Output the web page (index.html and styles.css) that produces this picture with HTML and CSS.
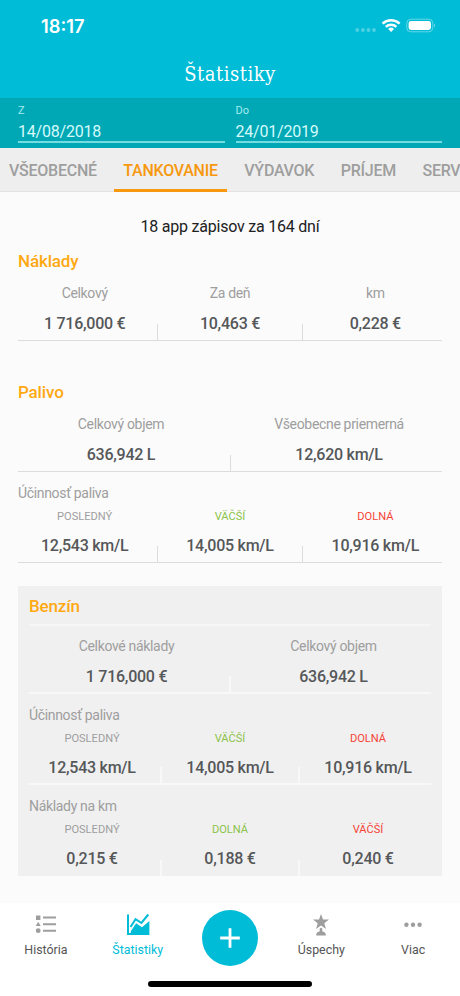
FILE: index.html
```html
<!DOCTYPE html>
<html lang="sk">
<head>
<meta charset="utf-8">
<title>Štatistiky</title>
<link rel="stylesheet" href="styles.css">
</head>
<body>
<div class="app">
  <header class="top">
    <div class="status">
      <span class="clock">18:17</span>
      <svg class="status-icons" width="80" height="20" viewBox="0 0 80 20">
        <g fill="#fff" opacity=".3"><circle cx="2.3" cy="14" r="1.9"/><circle cx="7.9" cy="14" r="1.9"/><circle cx="13.5" cy="14" r="1.9"/><circle cx="19" cy="14" r="1.9"/></g>
        <g fill="none" stroke="#fff" stroke-width="2.5"><path d="M27.6 7.6a12.4 12.4 0 0 1 17 0"/><path d="M30.8 10.9a7.7 7.7 0 0 1 10.6 0"/></g>
        <path fill="#fff" d="M33.2 12.9a4.2 4.2 0 0 1 5.8 0L36.1 16z"/>
        <rect x="51.8" y="3.2" width="26" height="12.6" rx="4" fill="none" stroke="#fff" stroke-opacity=".4"/>
        <rect x="53.6" y="5" width="22.4" height="9" rx="2.4" fill="#fff"/>
        <path d="M79 7.5q2 1.9 0 3.8z" fill="#fff" opacity=".5"/>
      </svg>
    </div>
    <h1 class="title">Štatistiky</h1>
  </header>
  <section class="dates">
    <div class="date"><span class="date-label">Z</span><span class="date-value">14/08/2018</span></div>
    <div class="date"><span class="date-label">Do</span><span class="date-value">24/01/2019</span></div>
  </section>
  <nav class="tabs">
    <span class="tab">VŠEOBECNÉ</span>
    <span class="tab active">TANKOVANIE</span>
    <span class="tab">VÝDAVOK</span>
    <span class="tab">PRÍJEM</span>
    <span class="tab">SERV</span>
  </nav>
  <main class="content">
    <p class="summary">18 app zápisov za 164 dní</p>
    <section class="group costs">
      <h2 class="heading">Náklady</h2>
      <div class="row three">
        <div class="stat"><span class="label">Celkový</span><span class="value">1 716,000 €</span></div>
        <div class="stat"><span class="label">Za deň</span><span class="value">10,463 €</span></div>
        <div class="stat"><span class="label">km</span><span class="value">0,228 €</span></div>
      </div>
    </section>
    <section class="group">
      <h2 class="heading">Palivo</h2>
      <div class="row two">
        <div class="stat"><span class="label">Celkový objem</span><span class="value">636,942 L</span></div>
        <div class="stat"><span class="label">Všeobecne priemerná</span><span class="value">12,620 km/L</span></div>
      </div>
      <h3 class="subheading">Účinnosť paliva</h3>
      <div class="row three compact">
        <div class="stat"><span class="label">POSLEDNÝ</span><span class="value">12,543 km/L</span></div>
        <div class="stat"><span class="label good">VÄČŠÍ</span><span class="value">14,005 km/L</span></div>
        <div class="stat"><span class="label bad">DOLNÁ</span><span class="value">10,916 km/L</span></div>
      </div>
    </section>
    <section class="card">
      <h2 class="heading">Benzín</h2>
      <div class="row two">
        <div class="stat"><span class="label">Celkové náklady</span><span class="value">1 716,000 €</span></div>
        <div class="stat"><span class="label">Celkový objem</span><span class="value">636,942 L</span></div>
      </div>
      <h3 class="subheading">Účinnosť paliva</h3>
      <div class="row three compact">
        <div class="stat"><span class="label">POSLEDNÝ</span><span class="value">12,543 km/L</span></div>
        <div class="stat"><span class="label good">VÄČŠÍ</span><span class="value">14,005 km/L</span></div>
        <div class="stat"><span class="label bad">DOLNÁ</span><span class="value">10,916 km/L</span></div>
      </div>
      <h3 class="subheading">Náklady na km</h3>
      <div class="row three compact last">
        <div class="stat"><span class="label">POSLEDNÝ</span><span class="value">0,215 €</span></div>
        <div class="stat"><span class="label good">DOLNÁ</span><span class="value">0,188 €</span></div>
        <div class="stat"><span class="label bad">VÄČŠÍ</span><span class="value">0,240 €</span></div>
      </div>
    </section>
  </main>
  <footer class="bottom">
    <nav class="nav">
      <a class="item">
        <svg width="24" height="24" viewBox="0 0 24 24" fill="#9e9e9e"><path d="M2 2.5h4.400v4.400H2zM9 3.500h13v2H9zM4.200 8.700l2.500 4.400h-5zM9 10.200h13v2H9zM9 16.700h13v2H9z"/><circle cx="4.200" cy="17.700" r="2.400"/></svg>
        <span>História</span>
      </a>
      <a class="item selected">
        <svg width="24" height="24" viewBox="0 0 24 24"><path d="M2 1.500v19.500h21" fill="none" stroke="#00bcd7" stroke-width="2"/><path d="M4.500 14L9.600 6.200l5.800 3.800L22.300 1.500" fill="none" stroke="#00bcd7" stroke-width="2"/><path d="M4.800 21.900v-3.700l5.300-8 5.900 4.100L23.400 8v13.900z" fill="#00bcd7"/></svg>
        <span>Štatistiky</span>
      </a>
      <a class="add"><svg width="56" height="56" viewBox="0 0 56 56"><circle cx="28" cy="28" r="28" fill="#00bcd7"/><path d="M28 18.200v19.600M18.200 28h19.600" stroke="#fff" stroke-width="2.800"/></svg></a>
      <a class="item">
        <svg width="24" height="24" viewBox="0 0 24 24" fill="#9e9e9e"><path d="M12 1l2 5.400 6 .2-4.700 3.600 1.700 5.700-5-3.300-5 3.300 1.700-5.700L4 6.600l6-.2zM10.700 15.600L12 14.700l1.300.9v3c2 .2 3.500 1.300 3.500 3.100v.8H7.200v-.8c0-1.800 1.500-2.900 3.500-3.100z"/></svg>
        <span>Úspechy</span>
      </a>
      <a class="item">
        <svg width="24" height="24" viewBox="0 0 24 24" fill="#9e9e9e"><circle cx="5.400" cy="11.700" r="2.200"/><circle cx="12" cy="11.700" r="2.200"/><circle cx="18.600" cy="11.700" r="2.200"/></svg>
        <span>Viac</span>
      </a>
    </nav>
    <div class="home"></div>
  </footer>
</div>
</body>
</html>
```
FILE: styles.css
```css
* { box-sizing: border-box; }
body { margin: 0; font-family: Roboto, sans-serif; background: #fbfbfb; }
h1, h2, h3, p { margin: 0; }
.app { width: 460px; height: 996px; display: flex; flex-direction: column; overflow: hidden; }

.top { height: 98px; flex: none; background: #00bcd7; color: #fff; }
.status { height: 50px; display: flex; justify-content: space-between; padding: 16px 25px 0 41px; }
.clock { font: 600 18.3px/20px Inter, sans-serif; }
.title { font: 400 20px/24px "Roboto Slab", "DejaVu Serif", serif; font-stretch: condensed; text-align: center; margin-top: 12px; letter-spacing: .5px; }

.dates { height: 50px; flex: none; display: grid; grid-template-columns: 1fr 1fr; gap: 11px; padding: 5px 18px 0; background: #00a8b5; }
.date { height: 40px; display: flex; flex-direction: column; border-bottom: 2px solid #72dce2; color: #d5fafb; }
.date-label { font-size: 11px; line-height: 15px; color: #a5edf0; }
.date-value { font-size: 16px; line-height: 24px; letter-spacing: -.2px; margin-top: 2px; }

.tabs { height: 44px; flex: none; display: flex; background: #eee; border-bottom: 1px solid #e3e3e3; }
.tab { flex: none; padding: 0 9px; margin-right: 8.5px; font-size: 16px; font-weight: 500; letter-spacing: -.25px; line-height: 46px; height: 44px; color: #9e9e9e; }
.tab.active { color: #f7980f; border-bottom: 3px solid #f7980f; }

.content { height: 711px; flex: none; padding: 23px 18px 0; }
.summary { font-size: 16px; line-height: 24px; letter-spacing: -.22px; text-align: center; color: #212121; }
.group { margin-top: 10px; }
.heading { font-size: 17px; font-weight: 500; line-height: 24px; letter-spacing: -.15px; color: #ffa913; }
.row { display: grid; column-gap: 12px; height: 68px; border-bottom: 1px solid #dcdcdc; }
.three { grid-template-columns: repeat(3, 1fr); }
.two { grid-template-columns: repeat(2, 1fr); }
.stat { position: relative; display: flex; flex-direction: column; align-items: center; padding-top: 10px; white-space: nowrap; }
.stat + .stat::before { content: ""; position: absolute; left: -6.5px; bottom: 0; width: 1px; height: 16px; background: #dcdcdc; }
.label { font-size: 14px; line-height: 20px; letter-spacing: -.33px; color: #9e9e9e; }
.value { font-size: 16px; font-weight: 500; line-height: 20px; letter-spacing: -.25px; margin-top: 11px; color: #555759; }
.subheading { font-size: 14px; font-weight: 400; line-height: 20px; letter-spacing: -.33px; margin-top: 11px; color: #9e9e9e; }
.costs { margin-bottom: 39px; }
.compact { height: 60px; }
.compact .stat { padding-top: 4px; }
.compact .label { font-size: 11.1px; letter-spacing: 0; }
.compact .value { margin-top: 9px; }
.label.good { color: #8bc34a; }
.label.bad { color: #f44336; }

.card { margin-top: 23px; height: 290px; padding: 8px 11px 0; background: #f0f0f0; }
.card .row { border-color: #f8f8f8; }
.card .heading + .row { margin-top: 6px; height: 70px; border-top: 2px solid #f6f6f6; border-bottom-width: 2px; }
.card .stat + .stat::before { left: -7px; background: #f8f8f8; width: 2px; }
.card .compact { height: 60px; border-bottom-width: 2px; }
.card .last { border: 0; }

.bottom { height: 93px; flex: none; background: #fff; }
.nav { width: 459px; height: 72px; display: grid; grid-template-columns: repeat(5, 1fr); }
.item { display: flex; flex-direction: column; align-items: center; padding-top: 10px; color: #555; font-size: 12.4px; line-height: 18px; }
.item span { margin-top: 4px; }
.selected { color: #00bcd7; }
.add { display: flex; justify-content: center; padding: 7px 0 0 1px; }
.home { width: 164px; height: 6px; margin: 6px auto 0; border-radius: 3px; background: #000; }
```
